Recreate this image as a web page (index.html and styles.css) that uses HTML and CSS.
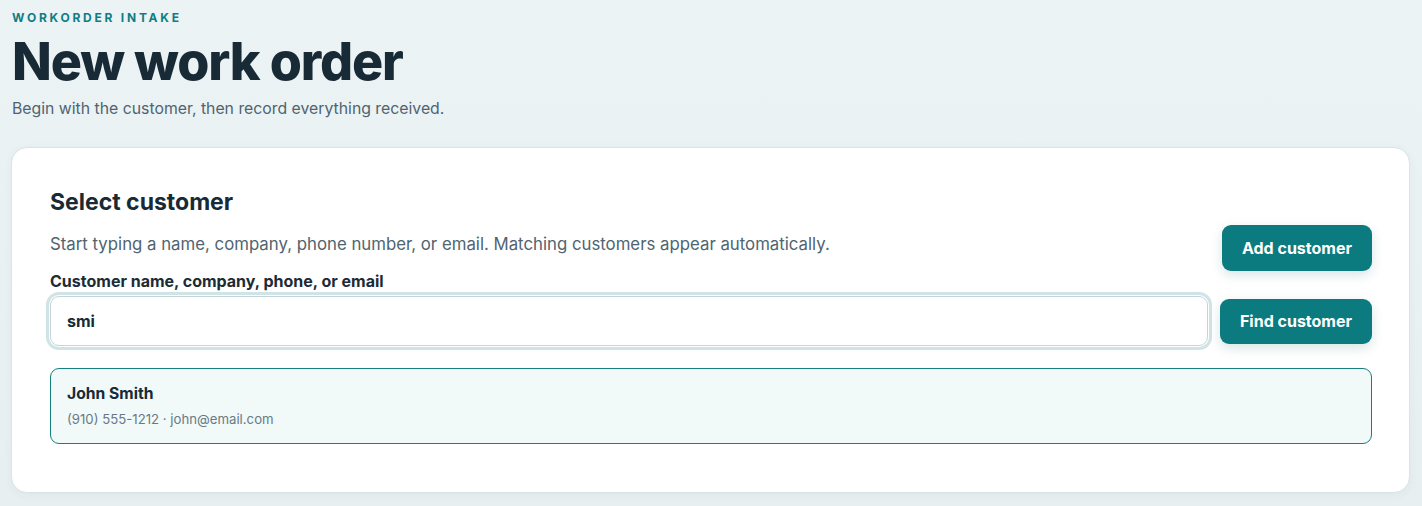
FILE: index.html
```html
<!DOCTYPE html>
<html lang="en">
<head>
<meta charset="utf-8">
<title>New work order</title>
<link rel="stylesheet" href="styles.css">
</head>
<body>
<main class="page">
  <header class="page-head">
    <div class="eyebrow">WORKORDER INTAKE</div>
    <h1 class="title">New work order</h1>
    <p class="subtitle">Begin with the customer, then record everything received.</p>
  </header>

  <section class="card">
    <div class="card-head">
      <div class="card-intro">
        <h2 class="card-title">Select customer</h2>
        <p class="card-desc">Start typing a name, company, phone number, or email. Matching customers appear automatically.</p>
      </div>
      <button class="btn btn-add" type="button">Add customer</button>
    </div>

    <label class="field-label" for="customer-search">Customer name, company, phone, or email</label>
    <div class="search-row">
      <input id="customer-search" class="search-input" type="text" value="smi">
      <button class="btn btn-find" type="button">Find customer</button>
    </div>

    <ul class="results">
      <li class="result">
        <div class="result-name">John Smith</div>
        <div class="result-meta">(910) 555-1212 · john@email.com</div>
      </li>
    </ul>
  </section>
</main>
</body>
</html>
```

FILE: styles.css
```css
* { box-sizing: border-box; }

html, body {
  margin: 0;
  padding: 0;
}

body {
  font-family: Inter, "Noto Sans", "Liberation Sans", sans-serif;
  background: linear-gradient(180deg, #ecf3f5 0%, #e7eff1 100%);
  color: #172a35;
  min-height: 506px;
}

.page {
  padding: 10px 12px 12px 11px;
}

.page-head {
  padding-left: 1px;
}

.eyebrow {
  font-size: 12px;
  font-weight: 700;
  letter-spacing: 0.23em;
  color: #0f7d83;
  line-height: 16px;
}

.title {
  margin: 6px 0 0;
  font-size: 52px;
  font-weight: 800;
  letter-spacing: -0.022em;
  line-height: 60px;
  color: #172a35;
}

.subtitle {
  margin: 5px 0 0;
  font-size: 15.8px;
  line-height: 24px;
  color: #4f6470;
}

.card {
  margin-top: 26px;
  background: #ffffff;
  border: 1px solid #d9e4e7;
  border-radius: 16px;
  padding: 39px 37px 48px 38px;
  box-shadow: 0 2px 10px rgba(30, 60, 70, 0.05);
}

.card-head {
  display: flex;
  justify-content: space-between;
  align-items: flex-end;
  gap: 24px;
}

.card-title {
  margin: 0;
  font-size: 23px;
  font-weight: 700;
  line-height: 30px;
  color: #172a35;
}

.card-desc {
  margin: 15px 0 14px;
  font-size: 16.8px;
  line-height: 25px;
  color: #4f6470;
}

.btn {
  font-family: inherit;
  font-size: 16px;
  font-weight: 700;
  color: #ffffff;
  background: #0b7b80;
  border: none;
  border-radius: 9px;
  height: 46px;
  padding: 0 20px;
  box-shadow: 0 4px 12px rgba(11, 90, 95, 0.16);
  cursor: pointer;
  white-space: nowrap;
}

.btn-add {
  flex: none;
}

.field-label {
  display: block;
  margin-top: 0;
  font-size: 16px;
  font-weight: 700;
  line-height: 20px;
  color: #1c2b34;
}

.search-row {
  display: flex;
  align-items: center;
  gap: 12px;
  margin-top: 5px;
}

.search-input {
  flex: 1;
  min-width: 0;
  height: 50px;
  padding: 0 16px;
  font-family: inherit;
  font-size: 16px;
  font-weight: 700;
  color: #172a35;
  background: #ffffff;
  border: 1px solid #c3d5d9;
  border-radius: 9px;
  outline: none;
  box-shadow: 0 0 0 1px #ffffff, 0 0 0 4px #d0e4e6;
}

.btn-find {
  flex: none;
  height: 45px;
}

.results {
  list-style: none;
  margin: 22px 0 0;
  padding: 0;
}

.result {
  background: #f1f9f9;
  border: 1px solid #15807f;
  border-radius: 9px;
  padding: 15px 16px 15px;
}

.result-name {
  font-size: 15.7px;
  font-weight: 700;
  line-height: 20px;
  color: #172a35;
}

.result-meta {
  margin-top: 6px;
  font-size: 13.2px;
  line-height: 18px;
  color: #687b85;
}
```
